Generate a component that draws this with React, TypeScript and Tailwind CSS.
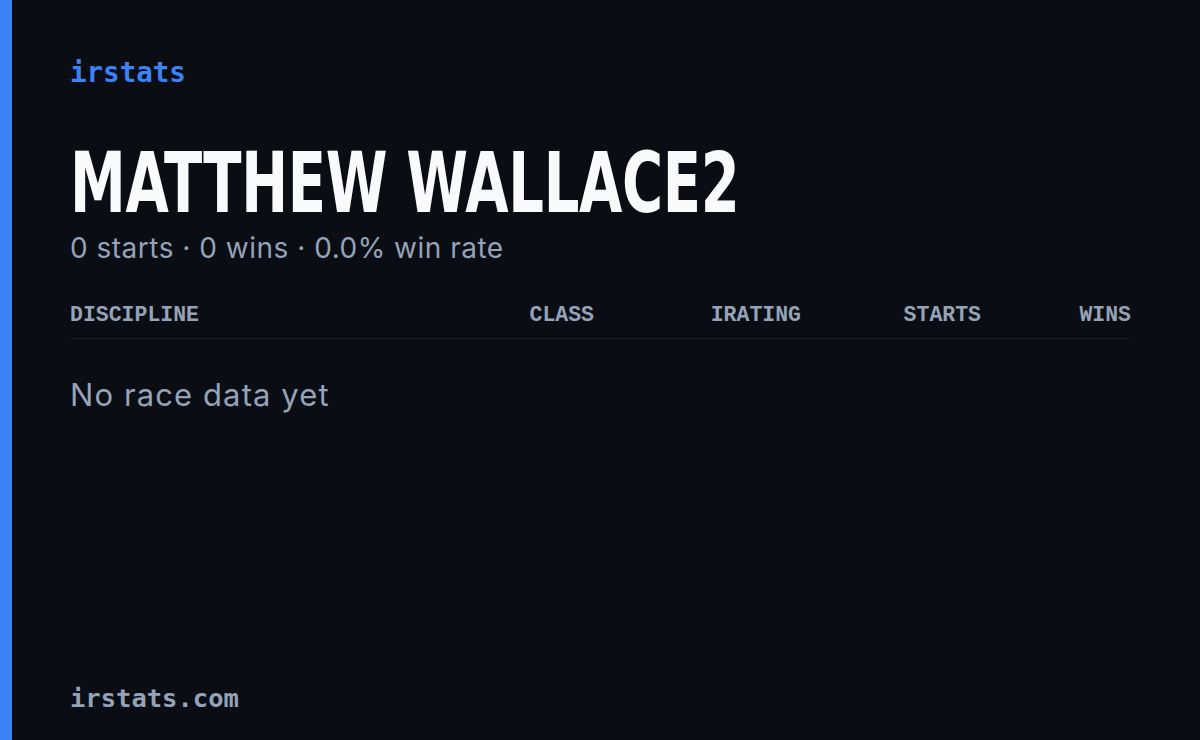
const cols = ["CLASS", "IRATING", "STARTS", "WINS"];

export default function App() {
  return (
    <div className="flex h-[740px] w-[1200px] bg-[#0a0d14]">
      <div className="w-[12px] shrink-0 bg-[#3b82f6]" />
      <div className="flex flex-1 flex-col pl-[58px] pr-[69px] pt-[54px] pb-[26px]">
        <div className="text-[27.5px] leading-[36px] font-semibold text-[#3b82f6] [font-family:'DejaVu_Sans_Mono',monospace]">
          irstats
        </div>

        {/* condensed display face isn't installed, squeeze the bold one */}
        <h1 className="mt-[44px] origin-left scale-x-[0.667] text-[84px] leading-[98px] font-bold tracking-[-0.5px] text-[#f8fafc] [font-family:'DejaVu_Sans',sans-serif] whitespace-nowrap">
          MATTHEW WALLACE2
        </h1>
        <p className="mt-[-2px] text-[28px] leading-[36px] tracking-[0.5px] text-[#94a3b8] [font-family:Inter,sans-serif]">
          0 starts · 0 wins · 0.0% win rate
        </p>

        <div className="mt-[36px] grid grid-cols-[1fr_120px_207px_180px_150px] border-b border-[#1a1e28] pb-[10px] text-[21.5px] leading-[26px] font-bold text-[#94a3b8] [font-family:'Liberation_Mono',monospace]">
          <div>DISCIPLINE</div>
          {cols.map((c) => (
            <div key={c} className="text-right">
              {c}
            </div>
          ))}
        </div>

        <div className="mt-[36px] text-[31px] leading-[40px] tracking-[1.1px] text-[#94a3b8] [font-family:Inter,sans-serif]">
          No race data yet
        </div>

        <div className="mt-auto text-[25.5px] leading-[32px] font-semibold text-[#94a3b8] [font-family:'DejaVu_Sans_Mono',monospace]">
          irstats.com
        </div>
      </div>
    </div>
  );
}
